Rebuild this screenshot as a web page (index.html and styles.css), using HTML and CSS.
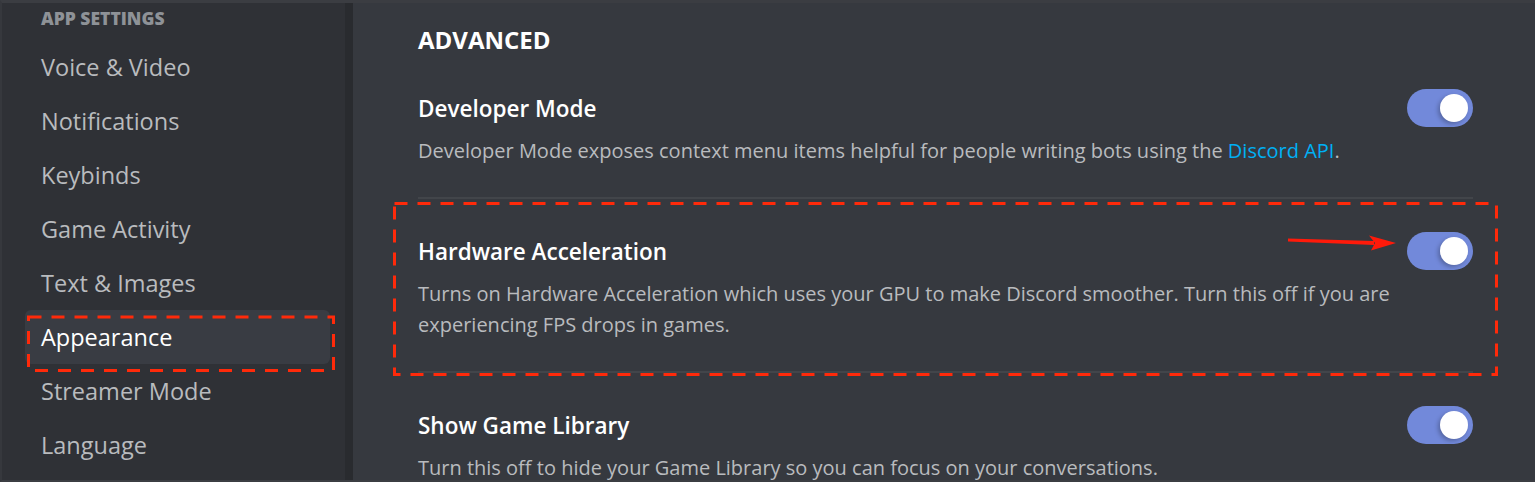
FILE: index.html
```html
<!DOCTYPE html>
<html>
<head>
<meta charset="utf-8">
<link rel="stylesheet" href="styles.css">
</head>
<body>
<div class="frame">
  <nav class="sidebar">
    <div class="side-header">App Settings</div>
    <div class="side-item">Voice &amp; Video</div>
    <div class="side-item">Notifications</div>
    <div class="side-item">Keybinds</div>
    <div class="side-item">Game Activity</div>
    <div class="side-item">Text &amp; Images</div>
    <div class="side-item selected">Appearance</div>
    <div class="side-item">Streamer Mode</div>
    <div class="side-item">Language</div>
  </nav>
  <div class="gutter"></div>
  <main class="content">
    <h2 class="section-title">Advanced</h2>
    <div class="setting">
      <div class="setting-row">
        <div class="setting-name">Developer Mode</div>
        <div class="toggle"><div class="knob"></div></div>
      </div>
      <div class="setting-desc">Developer Mode exposes context menu items helpful for people writing bots using the <span class="link">Discord API</span>.</div>
    </div>
    <div class="divider"></div>
    <div class="setting">
      <div class="setting-row">
        <div class="setting-name">Hardware Acceleration</div>
        <div class="toggle"><div class="knob"></div></div>
      </div>
      <div class="setting-desc">Turns on Hardware Acceleration which uses your GPU to make Discord smoother. Turn this off if you are experiencing FPS drops in games.</div>
    </div>
    <div class="divider"></div>
    <div class="setting">
      <div class="setting-row">
        <div class="setting-name">Show Game Library</div>
        <div class="toggle"><div class="knob"></div></div>
      </div>
      <div class="setting-desc">Turn this off to hide your Game Library so you can focus on your conversations.</div>
    </div>
  </main>
  <svg class="annotations" width="1535" height="482" viewBox="0 0 1535 482">
    <rect x="26.5" y="314" width="305" height="53.5" fill="none" stroke="#ff2a0a" stroke-width="3" stroke-dasharray="13 10"/>
    <rect x="392.5" y="200.5" width="1102" height="171" fill="none" stroke="#ff2a0a" stroke-width="3" stroke-dasharray="13 10"/>
    <polygon points="1286,235.5 1372,238 1372,242 1286,238.5" fill="#ff1a0a"/>
    <polygon points="1367,232.5 1394,240 1369,247.5 1373,240" fill="#ff1a0a"/>
  </svg>
</div>
</body>
</html>
```

FILE: styles.css
```css
html, body {
  margin: 0;
  padding: 0;
  background: #3a3c41;
}
.frame {
  position: relative;
  width: 1535px;
  height: 482px;
  box-sizing: border-box;
  border-top: 3px solid #3b3d42;
  border-left: 2px solid #36383d;
  border-bottom: 2px solid #3b3d42;
  display: flex;
  overflow: hidden;
  font-family: "Open Sans", "Noto Sans", sans-serif;
}
.sidebar {
  width: 343px;
  background: #2f3136;
  box-sizing: border-box;
}
.side-header {
  height: 37px;
  line-height: 30px;
  padding-left: 39px;
  font-size: 17.5px;
  font-weight: 800;
  text-transform: uppercase;
  color: #8e9297;
}
.side-item {
  height: 54px;
  line-height: 54px;
  margin-left: 23px;
  width: 305px;
  padding-left: 16px;
  box-sizing: border-box;
  font-size: 23.5px;
  color: #b9bbbe;
  border-radius: 6px;
}
.side-item.selected {
  background: #393c43;
  color: #ffffff;
  font-weight: 500;
}
.gutter {
  width: 8px;
  background: #292b2f;
}
.content {
  flex: 1;
  background: #36393f;
  padding-left: 65px;
  padding-right: 62px;
}
.section-title {
  margin: 0;
  height: 86px;
  line-height: 74px;
  font-size: 24px;
  font-weight: 700;
  text-transform: uppercase;
  color: #ffffff;
}
.setting-row {
  display: flex;
  align-items: center;
  justify-content: space-between;
  height: 38px;
}
.setting-name {
  font-size: 22.5px;
  font-weight: 600;
  color: #ffffff;
}
.setting-desc {
  margin-top: 8px;
  font-size: 20px;
  line-height: 31px;
  color: #b9bbbe;
}
.link {
  color: #00b0f4;
}
.divider {
  height: 2px;
  background: #42454a;
  margin: 31px 0 33px 0;
}
.toggle {
  width: 66px;
  height: 38px;
  border-radius: 19px;
  background: #7289da;
  position: relative;
  flex: none;
}
.knob {
  position: absolute;
  top: 5px;
  right: 5px;
  width: 28px;
  height: 28px;
  border-radius: 50%;
  background: #ffffff;
  box-shadow: -2px 2px 4px rgba(0, 0, 0, 0.25);
}
.annotations {
  position: absolute;
  left: 0;
  top: 0;
  pointer-events: none;
}
```
